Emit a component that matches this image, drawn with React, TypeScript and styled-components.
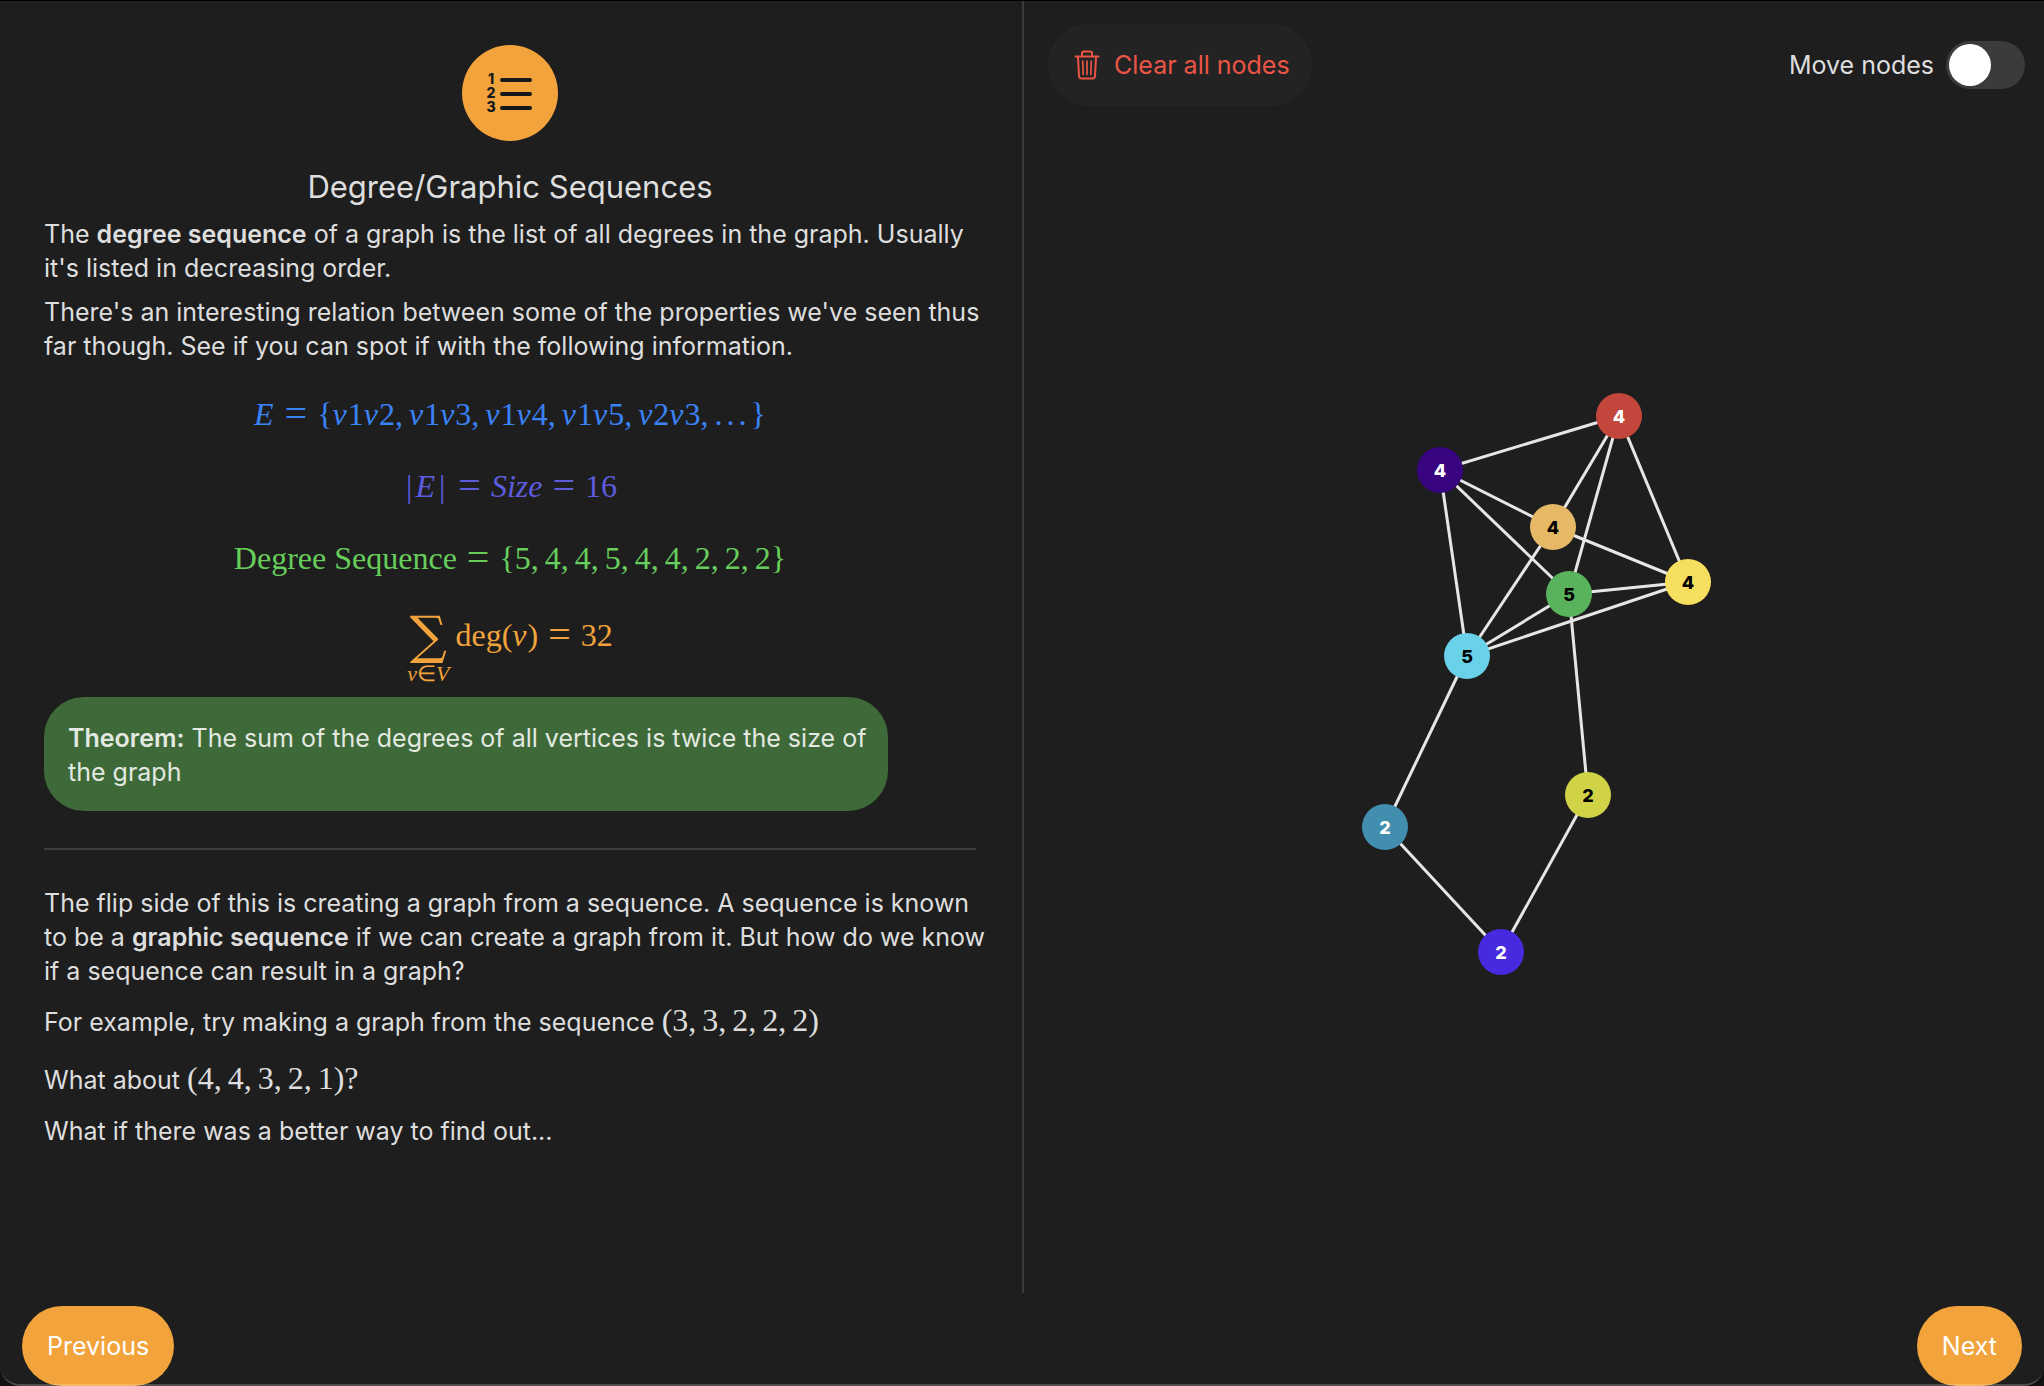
import React, { useState } from "react";
import styled, { createGlobalStyle } from "styled-components";

const GlobalStyle = createGlobalStyle`
  *, *::before, *::after { box-sizing: border-box; }
  body {
    margin: 0;
    background: #121212;
    color: #dedede;
    font-family: Inter, "Liberation Sans", sans-serif;
    font-size: 25px;
    line-height: 34px;
  }
`;

const Window = styled.div`
  position: relative;
  display: flex;
  flex-direction: column;
  min-height: 100vh;
  border-top: 1px solid #000;
  border-radius: 0 0 20px 20px;
  background: #1e1e1e;
  overflow: hidden;

  &::after {
    content: "";
    position: absolute;
    inset: 0;
    border-bottom: 2px solid rgba(255, 255, 255, 0.22);
    border-radius: 0 0 20px 20px;
    pointer-events: none;
  }
`;

const Main = styled.main`
  flex: 1;
  display: grid;
  grid-template-columns: 1fr 1fr;
`;

const Lesson = styled.article`
  display: flex;
  flex-direction: column;
  padding: 44px 46px 40px 44px;
`;

const Badge = styled.div`
  align-self: center;
  width: 96px;
  height: 96px;
  border-radius: 50%;
  background: #f2a33c;
`;

const Title = styled.h1`
  margin: 24px 0 8px;
  font-size: 31px;
  font-weight: 400;
  line-height: 44px;
  text-align: center;
`;

const Copy = styled.div`
  display: flex;
  flex-direction: column;
  gap: 10px;
  margin-right: -20px;
`;

const Paragraph = styled.p<{ $math?: boolean }>`
  margin: 0;
  line-height: ${(p) => (p.$math ? 48 : 34)}px;

  strong { font-weight: 600; }
`;

const Formulas = styled.div`
  display: flex;
  flex-direction: column;
  align-items: center;
  gap: 30px;
  margin: 30px 0 10px;
`;

const Math = styled.span`
  font-family: "Liberation Serif", "Times New Roman", serif;
  font-size: 32px;
  line-height: 34px;
  white-space: nowrap;
`;

const Formula = styled(Math)<{ $color: string }>`
  display: flex;
  color: ${(p) => p.$color};
  line-height: 42px;
`;

const Var = styled.i`
  padding-right: 1px;
`;

const Bar = styled.span`
  margin: 0 3px;
`;

const Equals = styled.span`
  margin: 0 10px;
  font-size: 40px;
`;

const Comma = styled.span`
  margin-right: 6px;
`;

const Dot = styled.span`
  width: 12px;
`;

const Sum = styled.span`
  display: flex;
  flex-direction: column;
  align-items: center;
  margin-right: 6px;
`;

const Sigma = styled.span`
  font-family: "DejaVu Serif", serif;
  font-size: 52px;
  line-height: 52px;
`;

const SumRange = styled.span`
  font-size: 22px;
  line-height: 26px;
`;

const SumBody = styled.span`
  display: flex;
  padding-top: 5px;
`;

const Theorem = styled.p`
  margin: 0 88px 0 0;
  padding: 24px 8px 22px 24px;
  border-radius: 40px;
  background: #3e6938;
  color: #e3e9e2;

  strong { font-weight: 600; }
`;

const Rule = styled.hr`
  width: 100%;
  height: 2px;
  margin: 37px 0 36px;
  border: 0;
  background: #3d3d3d;
`;

const Board = styled.section`
  display: flex;
  flex-direction: column;
  border-left: 2px solid #3a3a3a;
`;

const Toolbar = styled.div`
  display: flex;
  align-items: center;
  justify-content: space-between;
  padding: 23px 19px 0 24px;
`;

const ClearButton = styled.button`
  display: flex;
  align-items: center;
  gap: 14px;
  padding: 24px 22px 24px 26px;
  border: 0;
  border-radius: 41px;
  background: #232323;
  color: #eb5545;
  font: inherit;
`;

const SwitchLabel = styled.label`
  display: flex;
  align-items: center;
  gap: 12px;
`;

const Switch = styled.input`
  appearance: none;
  display: flex;
  width: 79px;
  height: 48px;
  margin: 0;
  padding: 3px;
  border-radius: 24px;
  background: #3b3b3d;

  &::before {
    content: "";
    width: 42px;
    height: 42px;
    border-radius: 50%;
    background: #fff;
  }

  &:checked { background: #f2a33c; justify-content: flex-end; }
`;

const Canvas = styled.div`
  position: relative;
  flex: 1;
`;

const Edges = styled.svg`
  position: absolute;
  inset: 0;
  width: 100%;
  height: 100%;
  stroke: #e6e6e6;
  stroke-width: 3;
`;

const GraphNode = styled.button<{ $fill: string; $ink: string }>`
  position: absolute;
  width: 46px;
  height: 46px;
  padding: 0;
  transform: translate(-50%, -50%);
  border: 0;
  border-radius: 50%;
  background: ${(p) => p.$fill};
  color: ${(p) => p.$ink};
  font: 800 18px/48px Inter, "Liberation Sans", sans-serif;
`;

const Footer = styled.footer`
  display: flex;
  justify-content: space-between;
  padding: 13px 22px 0;
`;

const NavButton = styled.button`
  padding: 23px 25px;
  border: 0;
  border-radius: 40px;
  background: #f2a33c;
  color: #fff;
  font: inherit;
`;

const nodes = {
  red: { x: 595, y: 310, degree: 4, fill: "#c3463c", ink: "#fff" },
  purple: { x: 416, y: 364, degree: 4, fill: "#39047f", ink: "#fff" },
  tan: { x: 529, y: 421, degree: 4, fill: "#e6b967", ink: "#000" },
  green: { x: 545, y: 488, degree: 5, fill: "#58b35c", ink: "#000" },
  yellow: { x: 664, y: 476, degree: 4, fill: "#f6de5f", ink: "#000" },
  cyan: { x: 443, y: 550, degree: 5, fill: "#69d1e8", ink: "#000" },
  blue: { x: 361, y: 721, degree: 2, fill: "#428eae", ink: "#fff" },
  lime: { x: 564, y: 689, degree: 2, fill: "#d0d345", ink: "#000" },
  indigo: { x: 477, y: 846, degree: 2, fill: "#452adf", ink: "#fff" },
};

type NodeName = keyof typeof nodes;

const edges: [NodeName, NodeName][] = [
  ["purple", "red"],
  ["purple", "tan"],
  ["purple", "green"],
  ["purple", "cyan"],
  ["red", "tan"],
  ["red", "green"],
  ["red", "yellow"],
  ["tan", "yellow"],
  ["tan", "cyan"],
  ["green", "yellow"],
  ["green", "cyan"],
  ["yellow", "cyan"],
  ["cyan", "blue"],
  ["green", "lime"],
  ["blue", "indigo"],
  ["lime", "indigo"],
];

const NumberedListIcon = () => (
  <svg width="96" height="96" viewBox="0 0 96 96" aria-hidden="true">
    <g fill="#14181a" fontFamily="Inter, sans-serif" fontSize="14" fontWeight="800" textAnchor="middle">
      <text x="29" y="39">1</text>
      <text x="29" y="53">2</text>
      <text x="29" y="67">3</text>
    </g>
    <path d="M40 35H68M40 49H68M40 63H68" stroke="#14181a" strokeWidth="4" strokeLinecap="round" />
  </svg>
);

const TrashIcon = () => (
  <svg width="26" height="30" viewBox="0 0 26 30" fill="none" stroke="currentColor" strokeWidth="2" strokeLinecap="round" strokeLinejoin="round" aria-hidden="true">
    <path d="M1.5 6.5H24.5M8 6V3.5Q8 1.5 10 1.5H16Q18 1.5 18 3.5V6" />
    <path d="M4 7L5 26Q5.200 28.500 7.500 28.500H18.500Q20.800 28.500 21 26L22 7" />
    <path d="M8.700 11L9.200 24.500M13 11V24.500M17.300 11L16.800 24.500" strokeWidth="1.700" />
  </svg>
);

const List = ({ items }: { items: React.ReactNode[] }) => (
  <>
    {items.map((item, i) => (
      <React.Fragment key={i}>
        {item}
        {i < items.length - 1 && <Comma>,</Comma>}
      </React.Fragment>
    ))}
  </>
);

const Edge = ({ a, b }: { a: number; b: number }) => (
  <span>
    <Var>v</Var>{a}<Var>v</Var>{b}
  </span>
);

export default function App() {
  const [moving, setMoving] = useState(false);

  return (
    <>
      <GlobalStyle />
      <Window>
        <Main>
          <Lesson>
            <Badge><NumberedListIcon /></Badge>
            <Title>Degree/Graphic Sequences</Title>
            <Copy>
              <Paragraph>
                The <strong>degree sequence</strong> of a graph is the list of all degrees in the graph. Usually it's listed in decreasing order.
              </Paragraph>
              <Paragraph>
                There's an interesting relation between some of the properties we've seen thus far though. See if you can spot if with the following information.
              </Paragraph>
            </Copy>
            <Formulas>
              <Formula $color="#3a82f7">
                <Var>E</Var><Equals>=</Equals>{"{"}
                <List
                  items={[
                    <Edge a={1} b={2} />,
                    <Edge a={1} b={3} />,
                    <Edge a={1} b={4} />,
                    <Edge a={1} b={5} />,
                    <Edge a={2} b={3} />,
                    <><Dot>.</Dot><Dot>.</Dot><Dot>.</Dot></>,
                  ]}
                />
                {"}"}
              </Formula>
              <Formula $color="#5d5cde">
                <Bar>|</Bar><Var>E</Var><Bar>|</Bar><Equals>=</Equals><i>Size</i><Equals>=</Equals>16
              </Formula>
              <Formula $color="#67ce5c">
                Degree Sequence<Equals>=</Equals>{"{"}
                <List items={[5, 4, 4, 5, 4, 4, 2, 2, 2]} />
                {"}"}
              </Formula>
              <Formula $color="#f2a33c">
                <Sum>
                  <Sigma>∑</Sigma>
                  <SumRange><i>v</i>∈<i>V</i></SumRange>
                </Sum>
                <SumBody>
                  deg(<Var>v</Var>)<Equals>=</Equals>32
                </SumBody>
              </Formula>
            </Formulas>
            <Theorem>
              <strong>Theorem:</strong> The sum of the degrees of all vertices is twice the size of the graph
            </Theorem>
            <Rule />
            <Copy>
              <Paragraph>
                The flip side of this is creating a graph from a sequence. A sequence is known to be a <strong>graphic sequence</strong> if we can create a graph from it. But how do we know if a sequence can result in a graph?
              </Paragraph>
              <Paragraph $math>
                For example, try making a graph from the sequence <Math>(<List items={[3, 3, 2, 2, 2]} />)</Math>
              </Paragraph>
              <Paragraph $math>
                What about <Math>(<List items={[4, 4, 3, 2, 1]} />)?</Math>
              </Paragraph>
              <Paragraph>What if there was a better way to find out...</Paragraph>
            </Copy>
          </Lesson>
          <Board>
            <Toolbar>
              <ClearButton type="button"><TrashIcon />Clear all nodes</ClearButton>
              <SwitchLabel>
                Move nodes
                <Switch type="checkbox" role="switch" checked={moving} onChange={(e) => setMoving(e.target.checked)} />
              </SwitchLabel>
            </Toolbar>
            <Canvas>
              <Edges>
                {edges.map(([a, b]) => (
                  <line key={a + b} x1={nodes[a].x} y1={nodes[a].y} x2={nodes[b].x} y2={nodes[b].y} />
                ))}
              </Edges>
              {Object.entries(nodes).map(([name, n]) => (
                <GraphNode key={name} type="button" $fill={n.fill} $ink={n.ink} style={{ left: n.x, top: n.y }}>
                  {n.degree}
                </GraphNode>
              ))}
            </Canvas>
          </Board>
        </Main>
        <Footer>
          <NavButton type="button">Previous</NavButton>
          <NavButton type="button">Next</NavButton>
        </Footer>
      </Window>
    </>
  );
}
